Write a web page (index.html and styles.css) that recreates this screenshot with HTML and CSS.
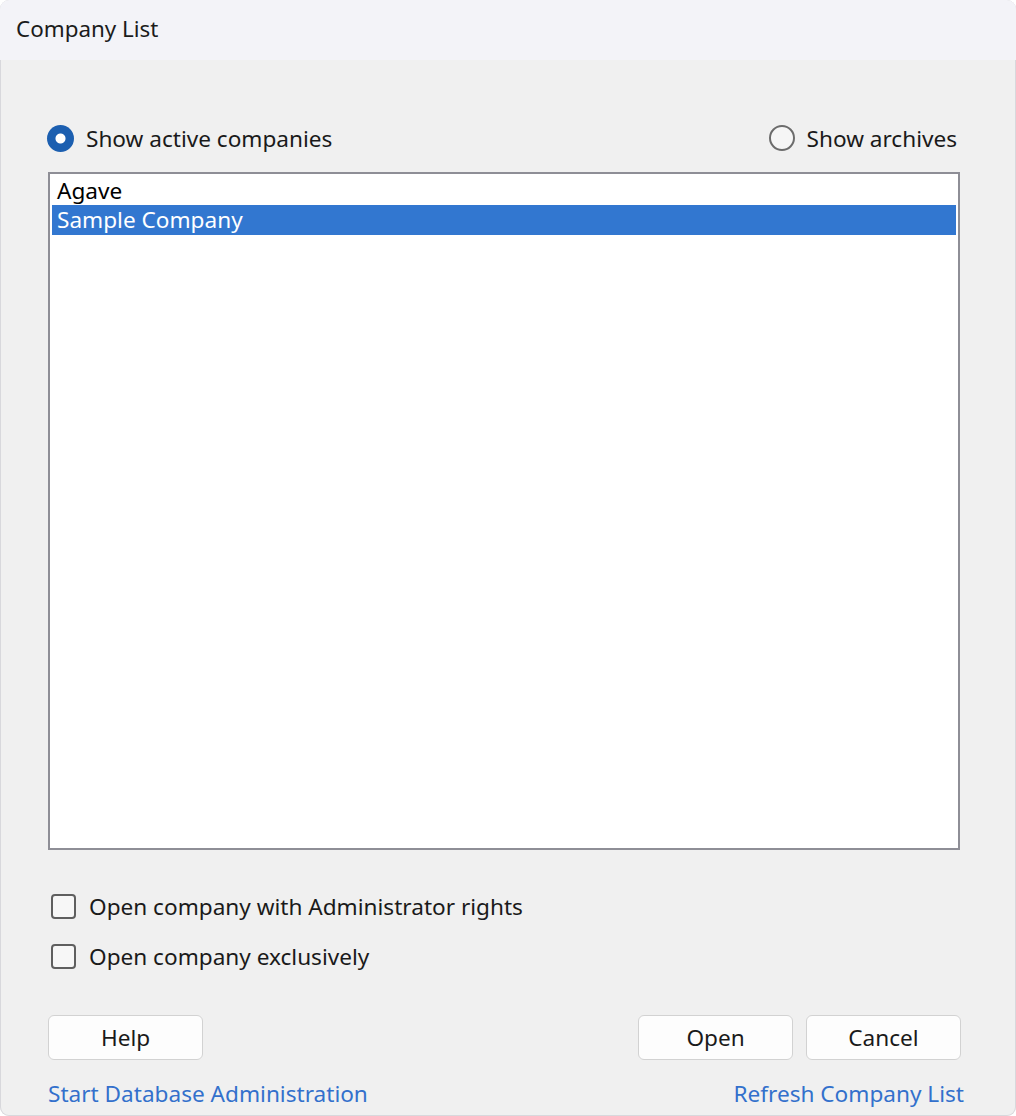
FILE: index.html
```html
<!DOCTYPE html>
<html lang="en">
<head>
<meta charset="utf-8">
<title>Company List</title>
<link rel="stylesheet" href="styles.css">
</head>
<body>
<div class="dialog">
  <div class="titlebar">Company List</div>
  <div class="content">
    <div class="radio-row">
      <label class="radio checked"><span class="radio-dot"></span><span>Show active companies</span></label>
      <label class="radio"><span class="radio-dot"></span><span>Show archives</span></label>
    </div>
    <div class="listbox">
      <div class="item">Agave</div>
      <div class="item selected">Sample Company</div>
    </div>
    <div class="checks">
      <label class="check"><span class="box"></span><span>Open company with Administrator rights</span></label>
      <label class="check"><span class="box"></span><span>Open company exclusively</span></label>
    </div>
    <div class="buttons">
      <button class="btn">Help</button>
      <div class="btn-group">
        <button class="btn">Open</button>
        <button class="btn">Cancel</button>
      </div>
    </div>
    <div class="links">
      <a class="link">Start Database Administration</a>
      <a class="link">Refresh Company List</a>
    </div>
  </div>
</div>
</body>
</html>
```
FILE: styles.css
```css
html, body {
  margin: 0;
  padding: 0;
  background: #ffffff;
}
body {
  width: 1016px;
  height: 1116px;
  overflow: hidden;
  font-family: "Noto Sans", "Open Sans", "Liberation Sans", sans-serif;
  font-size: 22.6px;
  color: #1a1a1a;
}
.dialog {
  width: 1016px;
  height: 1116px;
  background: #f0f0f0;
  border-radius: 9px;
  overflow: hidden;
  box-sizing: border-box;
  box-shadow: inset 0 0 0 1px #d8d8dc;
}
.titlebar {
  height: 60px;
  box-sizing: border-box;
  padding-bottom: 3px;
  background: #f3f3f8;
  display: flex;
  align-items: center;
  padding-left: 16px;
  font-size: 22.4px;
  color: #1b1b1b;
}
.content {
  padding: 64px 56px 0 48px;
}
.radio-row {
  height: 28px;
  display: flex;
  justify-content: space-between;
  align-items: center;
  margin-right: 3px;
}
.radio {
  display: flex;
  align-items: center;
  gap: 12px;
}
.radio-dot {
  width: 26px;
  height: 26px;
  border-radius: 50%;
  box-sizing: border-box;
  border: 2px solid #6c6c6c;
  background: #f6f6f6;
}
.radio.checked .radio-dot {
  border: none;
  background: radial-gradient(circle, #ffffff 0 4.5px, #1c5fb0 5.5px);
  width: 27px;
  height: 27px;
  margin-left: -1px;
}
.listbox {
  margin-top: 20px;
  height: 678px;
  box-sizing: border-box;
  border: 2px solid #8e8e96;
  background: #ffffff;
  padding: 2px;
}
.item {
  height: 29px;
  line-height: 29px;
  padding-left: 5px;
  color: #000;
}
.item.selected {
  height: 30px;
  line-height: 30px;
  background: #3277d0;
  color: #ffffff;
}
.checks {
  margin-top: 42px;
  display: flex;
  flex-direction: column;
  gap: 22px;
}
.check {
  height: 28px;
  display: flex;
  align-items: center;
  gap: 13px;
}
.box {
  margin-left: 3px;
  width: 25px;
  height: 25px;
  box-sizing: border-box;
  border: 2px solid #5f5f5f;
  border-radius: 4px;
  background: #f7f7f7;
}
.buttons {
  margin-top: 45px;
  display: flex;
  justify-content: space-between;
}
.btn-group {
  display: flex;
  gap: 13px;
  margin-right: -1px;
}
.btn {
  width: 155px;
  height: 45px;
  box-sizing: border-box;
  border: 1.5px solid #d2d2d2;
  border-radius: 6px;
  background: #fdfdfd;
  font-family: inherit;
  font-size: 22.6px;
  color: #1a1a1a;
  padding: 0;
}
.links {
  margin-top: 20px;
  display: flex;
  justify-content: space-between;
  line-height: 28px;
  margin-right: -4px;
}
.link {
  color: #3370cc;
}
```
